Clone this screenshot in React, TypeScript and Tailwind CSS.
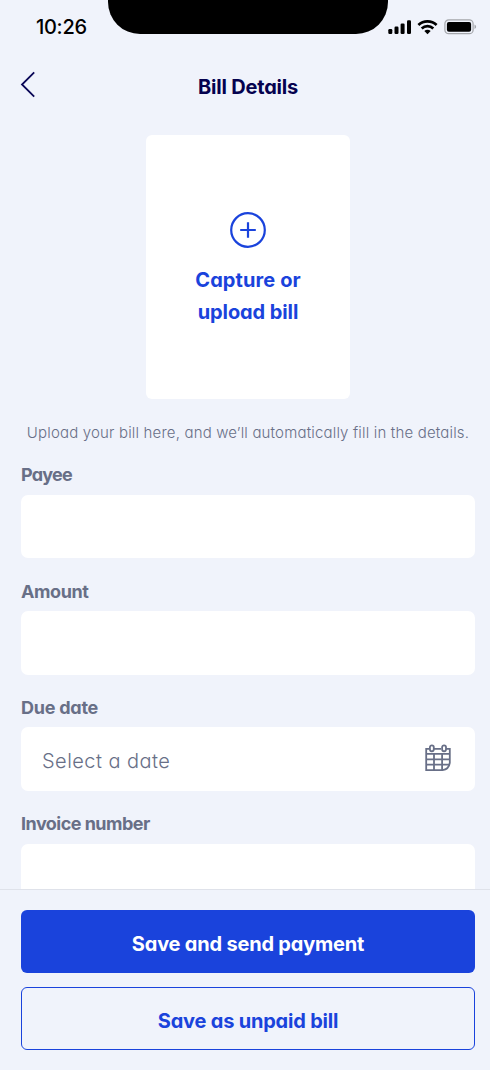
import type { ReactNode } from 'react';

interface FieldProps {
  label: string;
  labelClass: string;
  children?: ReactNode;
}

const SignalIcon = () => (
  <svg width="24" height="16" viewBox="0 0 24 16" fill="#000">
    <rect x="0.3" y="10" width="4" height="5" rx="1.2" />
    <rect x="6.5" y="7.5" width="4" height="7.5" rx="1.2" />
    <rect x="12.6" y="4.5" width="4" height="10.5" rx="1.2" />
    <rect x="19" y="1.3" width="4" height="13.7" rx="1.2" />
  </svg>
);

const WifiIcon = () => (
  <svg width="22" height="16" viewBox="0 0 22 16" fill="none" stroke="#000" strokeWidth="2.7">
    <path d="M1.4 5.9a13.3 13.3 0 0 1 18.2 0" />
    <path d="M4.7 9.5a8.5 8.5 0 0 1 11.6 0" />
    <path d="M7.3 12.1a5.2 5.2 0 0 1 6.4 0L10.5 15.2Z" fill="#000" stroke="none" />
  </svg>
);

const BatteryIcon = () => (
  <svg width="34" height="16" viewBox="0 0 34 16" fill="none">
    <rect x="0.9" y="0.9" width="28.2" height="13.8" rx="3.8" stroke="#a4a6ab" strokeWidth="1.2" />
    <rect x="2.9" y="2.9" width="24.2" height="9.8" rx="2" fill="#000" />
    <path d="M30.5 5.5c1 .5 1.6 1.3 1.6 2.3s-.6 1.8-1.6 2.3z" fill="#a4a6ab" />
  </svg>
);

const CalendarIcon = () => (
  <svg className="-mt-[2px]" width="28" height="28" viewBox="0 0 28 28" fill="none" stroke="#686f87" strokeWidth="1.8">
    <path d="M5 4.8H2.2V26.2H18.5C22.8 25.6 25.2 23.2 25.8 18.9V4.8H22M9 4.8H17" />
    <rect x="5.9" y="1.3" width="3.9" height="6" rx="1.95" />
    <rect x="18.1" y="1.3" width="3.9" height="6" rx="1.95" />
    <path d="M2.2 9.9H25.8M2.2 15.4H25.8M2.2 20.7H25.6M10 9.9V26.2M18.1 9.9V26.2" />
  </svg>
);

const Field = ({ label, labelClass, children }: FieldProps) => (
  <div className="h-[116.4px] shrink-0">
    <div className="flex h-[29.5px] items-start">
      <span className={`text-[18px] leading-5 font-bold whitespace-nowrap text-[#686f87] ${labelClass}`}>{label}</span>
    </div>
    <div className="flex h-[63.5px] items-center justify-between rounded-[7px] bg-white pr-[23px] pl-[21px]">
      {children}
    </div>
  </div>
);

const App = () => {
  return (
    <div className="flex h-[1070px] w-[490px] flex-col overflow-hidden bg-[#f0f3fb] font-['Inter',sans-serif] [font-feature-settings:'cv11']">
      {/* Status bar */}
      <div className="flex h-[54px] shrink-0 items-start">
        <div className="w-[108px] pt-[15px] pl-[36px] text-[20px] leading-6 font-medium tracking-[-0.3px] text-black">10:26</div>
        <div className="h-[34px] w-[280px] rounded-b-[32px] bg-black" />
        <div className="flex items-center gap-[5px] pt-[19px]">
          <SignalIcon />
          <WifiIcon />
          <BatteryIcon />
        </div>
      </div>

      {/* Header */}
      <header className="flex h-[81px] shrink-0 items-start pl-[20px]">
        <svg className="mt-[17px]" width="16" height="28" viewBox="0 0 16 28" fill="none" stroke="#0a0757" strokeWidth="1.8">
          <path d="M14.2 1.3L2 13.5L14.2 25.7" />
        </svg>
        <h1 className="mt-[21px] grow pr-[30px] text-center text-[20px] leading-6 font-bold tracking-[-0.2px] text-[#05024f]">
          Bill Details
        </h1>
      </header>

      <main className="flex min-h-0 grow flex-col overflow-hidden pr-[15px] pl-[21px]">
        <button className="flex h-[264px] w-[204px] shrink-0 flex-col items-center self-center rounded-[6px] bg-white pt-[77px] text-[20px] leading-8 font-bold text-[#1a43dc]">
          <svg width="36" height="36" viewBox="0 0 36 36" fill="none" stroke="#1a43dc" strokeWidth="2.2">
            <circle cx="18" cy="18" r="16.8" />
            <path d="M18 10.2V25.8M10.2 18H25.8" />
          </svg>
          <span className="mt-[16px] tracking-[0.1px] whitespace-nowrap">Capture or</span>
          <span className="tracking-[-0.1px] whitespace-nowrap">upload bill</span>
        </button>

        <p className="mt-[24px] mb-[22.2px] shrink-0 text-center text-[15px] leading-5 font-light tracking-[0.17px] whitespace-nowrap text-[#686f87]">
          Upload your bill here, and we’ll automatically fill in the details.
        </p>

        <Field label="Payee" labelClass="tracking-[-0.8px]" />
        <Field label="Amount" labelClass="tracking-[-0.4px]" />
        <Field label="Due date" labelClass="tracking-[-0.25px]">
          <span className="pt-[4px] text-[20px] font-light tracking-[0.45px] text-[#686f87]">Select a date</span>
          <CalendarIcon />
        </Field>
        <Field label="Invoice number" labelClass="tracking-[-0.53px]" />
      </main>

      {/* Actions */}
      <footer className="flex h-[181px] shrink-0 flex-col gap-[14px] border-t border-[#dfe2ea] pt-[20px] pr-[15px] pl-[21px]">
        <button className="h-[63px] rounded-[6px] bg-[#1a43dc] pt-[5px] text-[20px] font-bold tracking-[-0.2px] text-white">
          Save and send payment
        </button>
        <button className="h-[63px] rounded-[6px] border-[1.5px] border-[#1a43dc] pt-[5px] text-[20px] font-bold tracking-[-0.2px] text-[#1a43dc]">
          Save as unpaid bill
        </button>
      </footer>
    </div>
  );
};

export default App;
